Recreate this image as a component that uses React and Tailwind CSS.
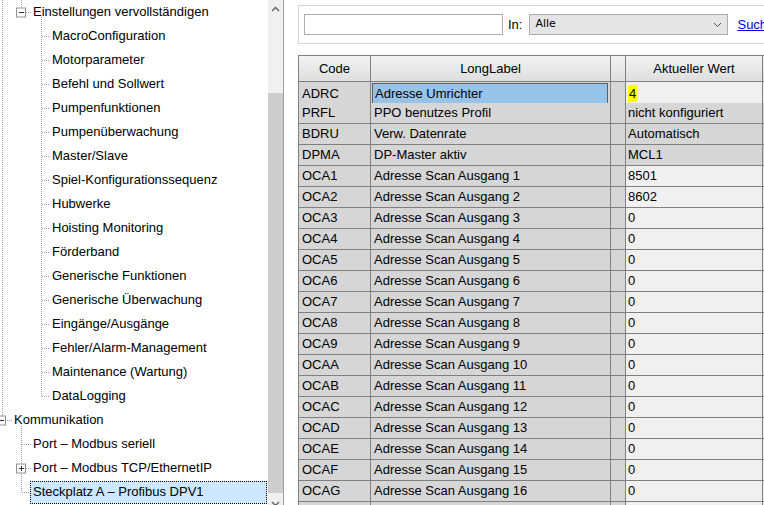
import React from 'react';

const FONT = { fontFamily: '"Liberation Sans", Arial, sans-serif' };

const tree = [
  { label: 'Einstellungen vervollständigen', level: 1 },
  { label: 'MacroConfiguration', level: 2 },
  { label: 'Motorparameter', level: 2 },
  { label: 'Befehl und Sollwert', level: 2 },
  { label: 'Pumpenfunktionen', level: 2 },
  { label: 'Pumpenüberwachung', level: 2 },
  { label: 'Master/Slave', level: 2 },
  { label: 'Spiel-Konfigurationssequenz', level: 2 },
  { label: 'Hubwerke', level: 2 },
  { label: 'Hoisting Monitoring', level: 2 },
  { label: 'Förderband', level: 2 },
  { label: 'Generische Funktionen', level: 2 },
  { label: 'Generische Überwachung', level: 2 },
  { label: 'Eingänge/Ausgänge', level: 2 },
  { label: 'Fehler/Alarm-Management', level: 2 },
  { label: 'Maintenance (Wartung)', level: 2 },
  { label: 'DataLogging', level: 2 },
  { label: 'Kommunikation', level: 0 },
  { label: 'Port – Modbus seriell', level: 1 },
  { label: 'Port – Modbus TCP/EthernetIP', level: 1 },
  { label: 'Steckplatz A – Profibus DPV1', level: 1, selected: true },
];

const indent = ['pl-[14px]', 'pl-[33px]', 'pl-[52px]'];

const rows = [
  ['ADRC', 'Adresse Umrichter', '4'],
  ['PRFL', 'PPO benutzes Profil', 'nicht konfiguriert'],
  ['BDRU', 'Verw. Datenrate', 'Automatisch'],
  ['DPMA', 'DP-Master aktiv', 'MCL1'],
  ['OCA1', 'Adresse Scan Ausgang 1', '8501'],
  ['OCA2', 'Adresse Scan Ausgang 2', '8602'],
  ['OCA3', 'Adresse Scan Ausgang 3', '0'],
  ['OCA4', 'Adresse Scan Ausgang 4', '0'],
  ['OCA5', 'Adresse Scan Ausgang 5', '0'],
  ['OCA6', 'Adresse Scan Ausgang 6', '0'],
  ['OCA7', 'Adresse Scan Ausgang 7', '0'],
  ['OCA8', 'Adresse Scan Ausgang 8', '0'],
  ['OCA9', 'Adresse Scan Ausgang 9', '0'],
  ['OCAA', 'Adresse Scan Ausgang 10', '0'],
  ['OCAB', 'Adresse Scan Ausgang 11', '0'],
  ['OCAC', 'Adresse Scan Ausgang 12', '0'],
  ['OCAD', 'Adresse Scan Ausgang 13', '0'],
  ['OCAE', 'Adresse Scan Ausgang 14', '0'],
  ['OCAF', 'Adresse Scan Ausgang 15', '0'],
  ['OCAG', 'Adresse Scan Ausgang 16', '0'],
  ['', '', ''],
];

const Box = ({ x, y, plus }) => (
  <g>
    <rect x={x - 4.5} y={y - 4.5} width="9" height="9" fill="#fff" stroke="#919191" />
    <line x1={x - 2} y1={y} x2={x + 3} y2={y} stroke="#333" />
    {plus && <line x1={x + 0.5} y1={y - 2.5} x2={x + 0.5} y2={y + 2.5} stroke="#333" />}
  </g>
);

const TreeLines = () => {
  const dot = { stroke: '#a0a0a0', strokeDasharray: '1 1', strokeWidth: 1 };
  const lvl2 = [];
  for (let i = 1; i <= 16; i++) lvl2.push(12 + 24 * i + 0.5);
  return (
    <svg className="absolute left-0 top-0 pointer-events-none" width="268" height="505">
      <line x1="2.5" y1="0" x2="2.5" y2="416" {...dot} />
      <line x1="21.5" y1="0" x2="21.5" y2="8" {...dot} />
      <line x1="26" y1="12.5" x2="31" y2="12.5" {...dot} />
      <line x1="41.5" y1="17" x2="41.5" y2={lvl2[15]} {...dot} />
      {lvl2.map((y) => (
        <line key={y} x1="42" y1={y} x2="50" y2={y} {...dot} />
      ))}
      <Box x={21} y={12.5} />
      <line x1="7" y1="420.5" x2="12" y2="420.5" {...dot} />
      <Box x={1} y={420.5} />
      <line x1="21.5" y1="426" x2="21.5" y2="492.5" {...dot} />
      <line x1="22" y1="444.5" x2="31" y2="444.5" {...dot} />
      <line x1="26" y1="468.5" x2="31" y2="468.5" {...dot} />
      <line x1="22" y1="492.5" x2="30" y2="492.5" {...dot} />
      <Box x={21} y={468.5} plus />
    </svg>
  );
};

const Tree = () => (
  <div className="relative w-[268px] shrink-0 h-full bg-white overflow-hidden">
    <TreeLines />
    {tree.map((t) => (
      <div key={t.label} className={`h-[24px] flex items-center ${indent[t.level]}`}>
        {t.selected ? (
          <div className="ml-[-3px] w-[237px] h-[23px] flex items-center pl-[2px] bg-[#cce8ff] border border-dotted border-black">
            {t.label}
          </div>
        ) : (
          <span>{t.label}</span>
        )}
      </div>
    ))}
  </div>
);

const ScrollBar = () => (
  <div className="w-[16px] shrink-0 h-full bg-[#f0f0f0] border-r border-[#a0a0a0] flex flex-col overflow-hidden">
    <div className="h-[17px] shrink-0 flex items-center justify-center">
      <svg width="9" height="6" viewBox="0 0 9 6">
        <path d="M1 5 L4.5 1.5 L8 5" fill="none" stroke="#606060" strokeWidth="1.4" />
      </svg>
    </div>
    <div className="h-[76px] shrink-0" />
    <div className="h-[400px] shrink-0 bg-[#cdcdcd]" />
    <div className="h-[2px] shrink-0" />
    <div className="h-[17px] shrink-0 flex items-center justify-center">
      <svg width="9" height="6" viewBox="0 0 9 6">
        <path d="M1 1 L4.5 4.5 L8 1" fill="none" stroke="#606060" strokeWidth="1.4" />
      </svg>
    </div>
  </div>
);

const cols = 'grid grid-cols-[72px_240px_15px_137px_60px]';

const Grid = () => (
  <div className="mt-[11px] border-l border-t border-[#808080] w-[525px]">
    <div className={`${cols} h-[26px]`}>
      {['Code', 'LongLabel', '', 'Aktueller Wert', ''].map((h, i) => (
        <div
          key={i}
          className="bg-linear-to-b from-[#f2f2f2] to-[#dedede] border-r border-b border-[#808080] flex items-center justify-center"
        >
          {h}
        </div>
      ))}
    </div>
    {rows.map(([code, label, val], i) => {
      const gray = 'bg-[#d6d6d6] border-r border-b border-[#808080] flex items-center pl-[3px] whitespace-nowrap overflow-hidden';
      const light = i === 0 || i >= 4 ? 'bg-[#f0f0f0]' : 'bg-[#d6d6d6]';
      return (
        <div key={i} className={`${cols} h-[21px]`}>
          <div className={gray}>{code}</div>
          {i === 0 ? (
            <div className="bg-[#d6d6d6] border-r border-b border-[#808080] p-[1px] pr-[2px]">
              <div className="h-full bg-[#98c3e8] border border-[#5e5e5e] flex items-center pl-[2px]">{label}</div>
            </div>
          ) : (
            <div className={gray}>{label}</div>
          )}
          <div className="bg-[#d6d6d6] border-r border-b border-[#808080]" />
          <div className={`${light} border-r border-b border-[#808080] flex items-center pl-[2px] whitespace-nowrap`}>
            {i === 0 ? <span className="bg-[#ffff00] px-[1px] leading-[17px]">{val}</span> : val}
          </div>
          <div className={`${light} border-r border-b border-[#808080]`} />
        </div>
      );
    })}
  </div>
);

const Search = () => (
  <div className="mt-[5px] h-[39px] w-[490px] border border-[#d5d5d5] flex items-center pl-[5px]">
    <div className="w-[199px] h-[21px] border border-[#adadad] bg-white" />
    <span className="ml-[5px]">In:</span>
    <div className="ml-[7px] w-[199px] h-[21px] border border-[#adadad] bg-[#e5e5e5] flex items-center justify-between pl-[5px] pr-[5px]">
      <span className="text-[11px]" style={{ fontFamily: '"DejaVu Sans", sans-serif' }}>Alle</span>
      <svg width="9" height="6" viewBox="0 0 9 6">
        <path d="M1 1 L4.5 4.5 L8 1" fill="none" stroke="#555" strokeWidth="1" />
      </svg>
    </div>
    <span className="ml-[9px] text-[#0000ee] underline">Suche</span>
  </div>
);

export default function App() {
  return (
    <div className="w-[764px] h-[505px] flex overflow-hidden bg-white text-[13px] text-black" style={FONT}>
      <Tree />
      <ScrollBar />
      <div className="flex-1 pl-[14px] overflow-hidden">
        <Search />
        <Grid />
      </div>
    </div>
  );
}
